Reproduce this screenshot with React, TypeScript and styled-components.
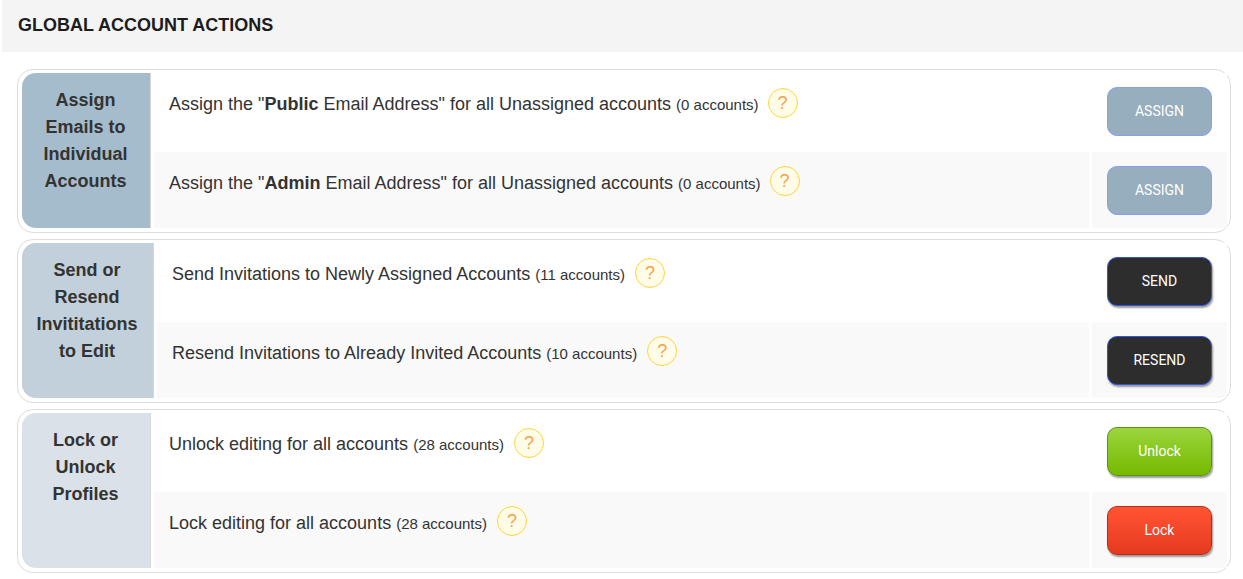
import React from 'react';
import styled, { createGlobalStyle } from 'styled-components';

const GlobalStyle = createGlobalStyle`
  html, body {
    margin: 0;
    padding: 0;
    background: #fff;
  }
  body {
    font-family: "Liberation Sans", Arial, sans-serif;
    color: #333;
  }
`;

const Page = styled.div`
  width: 1243px;
  height: 579px;
  overflow: hidden;
`;

const Header = styled.h2`
  box-sizing: border-box;
  height: 52px;
  margin: 0 0 17px 2px;
  padding: 15px 0 0 16px;
  background: #f4f4f4;
  color: #1c1c1c;
  font-size: 18px;
  line-height: 20px;
  font-weight: 700;
`;

const Groups = styled.div`
  display: flex;
  flex-direction: column;
  gap: 6px;
  margin: 0 12px 0 17px;
`;

const Group = styled.section`
  box-sizing: border-box;
  height: 164px;
  padding: 3px 3px 3px 4px;
  border: 1px solid #ddd;
  border-radius: 16px;
  display: flex;
`;

const Side = styled.div<{ $bg: string; $width: number }>`
  box-sizing: border-box;
  width: ${(p) => p.$width}px;
  height: 155px;
  flex: none;
  padding: 14px 9px 0 8px;
  background: ${(p) => p.$bg};
  border-right: 1px solid #d8d8d8;
  border-radius: 14px 0 0 14px;
  color: #333;
  font-size: 18px;
  line-height: 27px;
  font-weight: 700;
  text-align: center;
`;

const Rows = styled.div`
  flex: 1;
  min-width: 0;
  display: flex;
  flex-direction: column;
`;

const Row = styled.div<{ $alt?: boolean }>`
  display: grid;
  grid-template-columns: 1fr 135px;
  column-gap: 3px;
  height: ${(p) => (p.$alt ? 76 : 79)}px;
  margin-left: 3px;
`;

const Message = styled.div<{ $alt?: boolean; $indent: number }>`
  display: flex;
  align-items: flex-start;
  padding: ${(p) => (p.$alt ? 14 : 15)}px 0 0 ${(p) => p.$indent}px;
  background: ${(p) => (p.$alt ? '#f9f9f9' : '#fff')};
`;

const Label = styled.span<{ $alt?: boolean }>`
  margin-top: ${(p) => (p.$alt ? 7 : 6)}px;
  font-size: 18px;
  line-height: 20px;
  color: #333;
`;

const Count = styled.small`
  font-size: 15px;
`;

const Help = styled.span<{ $gap: number }>`
  box-sizing: border-box;
  width: 30px;
  height: 30px;
  margin-left: ${(p) => p.$gap}px;
  flex: none;
  display: flex;
  align-items: center;
  justify-content: center;
  border: 1px solid #ffd43a;
  border-radius: 50%;
  background: #fffde8;
  color: #f9a04e;
  font-size: 18px;
`;

const ActionCell = styled.div<{ $alt?: boolean }>`
  display: flex;
  justify-content: center;
  align-items: flex-start;
  padding-top: 14px;
  background: ${(p) => (p.$alt ? '#f9f9f9' : '#fff')};
`;

const tones = {
  assign: `
    background: #96aebd;
    border-color: #8b9ff0;
    color: #fff;
  `,
  send: `
    background: #2d2d2d;
    border-color: #2f55e4;
    color: #fff;
    box-shadow: 1px 2px 2px rgba(0, 0, 0, 0.4);
  `,
  unlock: `
    background: linear-gradient(#9bd63e, #76b900);
    border-color: #5f8f14;
    color: #fff;
    box-shadow: 1px 2px 2px rgba(0, 0, 0, 0.4);
  `,
  lock: `
    background: linear-gradient(#ff5433, #e63a20);
    border-color: #b92a16;
    color: #fff;
    box-shadow: 1px 2px 2px rgba(0, 0, 0, 0.4);
  `,
};

type Tone = keyof typeof tones;

const ActionButton = styled.button<{ $tone: Tone }>`
  box-sizing: border-box;
  width: 105px;
  height: 49px;
  padding: 0 0 2px;
  border: 1px solid;
  border-radius: 10px;
  font-family: Roboto, sans-serif;
  font-size: 14px;
  font-weight: 400;
  ${(p) => tones[p.$tone]}
`;

interface Action {
  label: React.ReactNode;
  count: string;
  button: string;
  tone: Tone;
}

interface GroupData {
  title: React.ReactNode;
  bg: string;
  width: number;
  indent: number;
  helpGap: number;
  actions: Action[];
}

const groups: GroupData[] = [
  {
    title: (
      <>
        Assign
        <br />
        Emails to
        <br />
        Individual
        <br />
        Accounts
      </>
    ),
    bg: '#a5bccd',
    width: 129,
    indent: 15,
    helpGap: 9,
    actions: [
      {
        label: (
          <>
            Assign the "<b>Public</b> Email Address" for all Unassigned accounts
          </>
        ),
        count: '(0 accounts)',
        button: 'ASSIGN',
        tone: 'assign',
      },
      {
        label: (
          <>
            Assign the "<b>Admin</b> Email Address" for all Unassigned accounts
          </>
        ),
        count: '(0 accounts)',
        button: 'ASSIGN',
        tone: 'assign',
      },
    ],
  },
  {
    title: (
      <>
        Send or
        <br />
        Resend
        <br />
        Invititations
        <br />
        to Edit
      </>
    ),
    bg: '#c1d0da',
    width: 132,
    indent: 15,
    helpGap: 10,
    actions: [
      {
        label: 'Send Invitations to Newly Assigned Accounts',
        count: '(11 accounts)',
        button: 'SEND',
        tone: 'send',
      },
      {
        label: 'Resend Invitations to Already Invited Accounts',
        count: '(10 accounts)',
        button: 'RESEND',
        tone: 'send',
      },
    ],
  },
  {
    title: (
      <>
        Lock or
        <br />
        Unlock
        <br />
        Profiles
      </>
    ),
    bg: '#dae1e8',
    width: 129,
    indent: 15,
    helpGap: 10,
    actions: [
      {
        label: 'Unlock editing for all accounts',
        count: '(28 accounts)',
        button: 'Unlock',
        tone: 'unlock',
      },
      {
        label: 'Lock editing for all accounts',
        count: '(28 accounts)',
        button: 'Lock',
        tone: 'lock',
      },
    ],
  },
];

const App: React.FC = () => (
  <Page>
    <GlobalStyle />
    <Header>GLOBAL ACCOUNT ACTIONS</Header>
    <Groups>
      {groups.map((group, g) => (
        <Group key={g}>
          <Side $bg={group.bg} $width={group.width}>
            {group.title}
          </Side>
          <Rows>
            {group.actions.map((action, i) => (
              <Row key={i} $alt={i === 1}>
                <Message $alt={i === 1} $indent={group.indent}>
                  <Label $alt={i === 1}>
                    {action.label} <Count>{action.count}</Count>
                  </Label>
                  <Help $gap={group.helpGap}>?</Help>
                </Message>
                <ActionCell $alt={i === 1}>
                  <ActionButton $tone={action.tone}>{action.button}</ActionButton>
                </ActionCell>
              </Row>
            ))}
          </Rows>
        </Group>
      ))}
    </Groups>
  </Page>
);

export default App;
